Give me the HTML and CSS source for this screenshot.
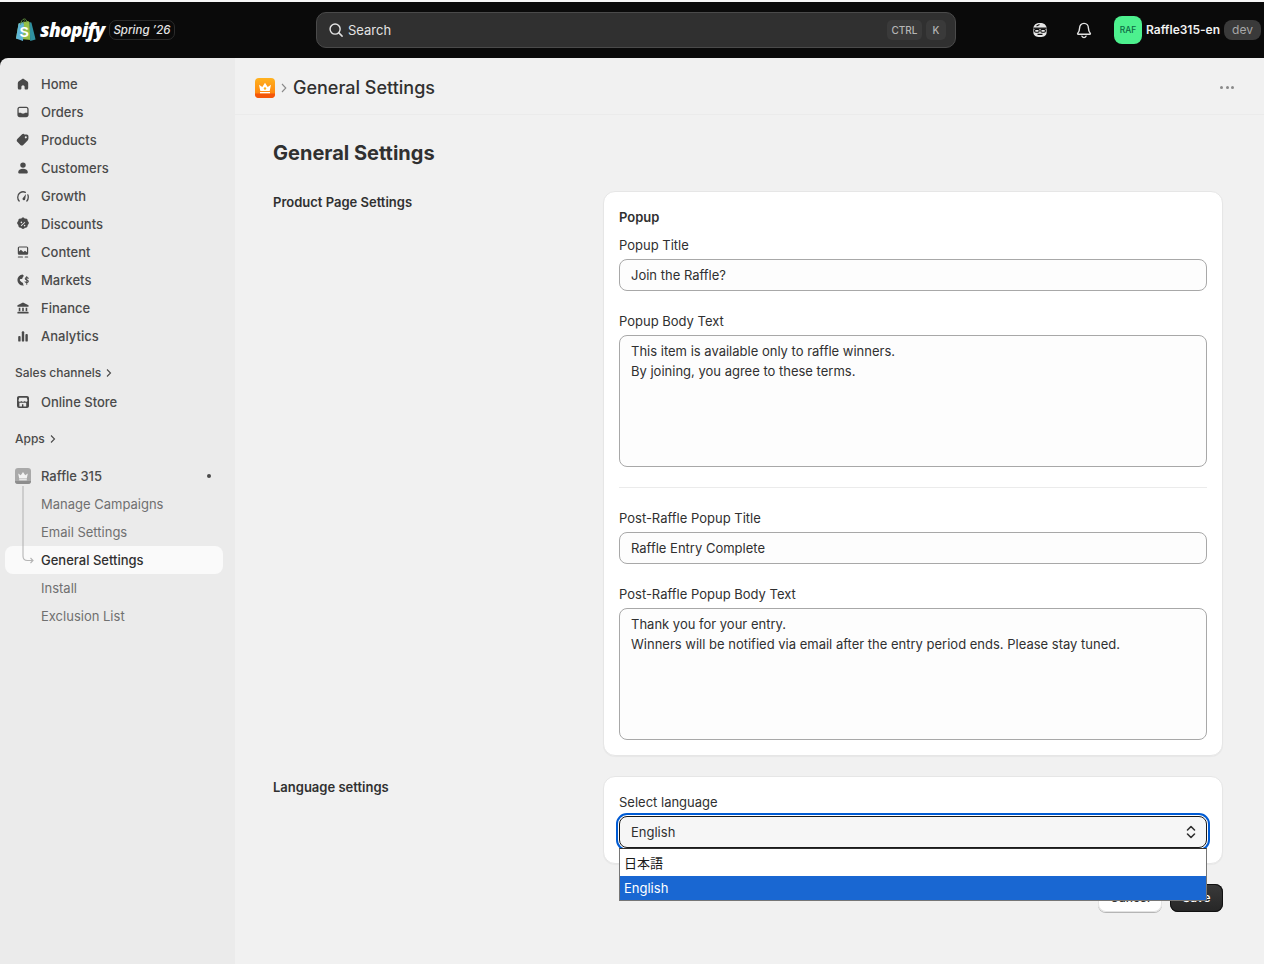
FILE: index.html
```html
<!DOCTYPE html>
<html lang="en">
<head>
<meta charset="utf-8">
<title>General Settings</title>
<link rel="stylesheet" href="styles.css">
</head>
<body>
<header class="topbar">
  <div class="brand">
    <svg class="bag" viewBox="0 0 21 24" width="21" height="24">
      <path d="M1 20.5 3.6 5.6 13 3l1.6 1.2L15.4 22 1 20.5Z" fill="#95bf47"/>
      <path d="M1 20.5 3.6 5.6 9 4l-1 19-7-2.5Z" fill="#5fb6d8"/>
      <path d="M14.6 4.2 16.4 4.6 20.6 21.4 15.2 23Z" fill="#2f8f9f"/>
      <path d="M5.6 6.6C5.8 3.4 7.4 1 9.4 1c1.5 0 2.3 1.3 2.4 3.4M8.2 5.6c.2-1.7.9-3 1.7-3" fill="none" stroke="#5e8e3e" stroke-width="1"/>
      <text x="4.6" y="18.5" class="bag-s">S</text>
    </svg>
    <span class="wordmark">shopify</span>
    <span class="season">Spring ’26</span>
  </div>
  <div class="search">
    <svg class="icon-search" viewBox="0 0 20 20" width="18" height="18"><circle cx="9" cy="9" r="5.6" fill="none" stroke="#e3e3e3" stroke-width="1.6"/><path d="m13.2 13.2 3.6 3.6" stroke="#e3e3e3" stroke-width="1.6" stroke-linecap="round"/></svg>
    <span class="search-text">Search</span>
    <kbd class="key key-ctrl">CTRL</kbd>
    <kbd class="key key-k">K</kbd>
  </div>
  <div class="top-actions">
    <svg class="top-icon" viewBox="0 0 20 20" width="20" height="20"><path d="M3.4 8.6C3.4 4.8 6.2 3 10 3s6.600 1.800 6.600 5.600v3.800C16.600 15.400 13.800 17 10 17s-6.600-1.600-6.600-4.600Z" fill="#e6e6e6"/><path d="M3.500 8.200h13" stroke="#0a0a0a" stroke-width="1.300"/><rect x="4.600" y="9.400" width="4.600" height="2.800" rx="1.200" fill="none" stroke="#0a0a0a" stroke-width="1.100"/><rect x="10.800" y="9.400" width="4.600" height="2.800" rx="1.200" fill="none" stroke="#0a0a0a" stroke-width="1.100"/><path d="M7.500 14.400h5M6.500 6l3-1.600" stroke="#0a0a0a" stroke-width="1.100"/></svg>
    <svg class="top-icon bell" viewBox="0 0 20 20" width="20" height="20"><path d="M10 3.400c-2.700 0-4.400 2-4.400 4.600 0 2.600-.7 3.800-1.900 5.400-.3.400 0 .8.400.8h11.800c.4 0 .700-.4.400-.8-1.200-1.600-1.900-2.800-1.900-5.400 0-2.600-1.700-4.600-4.400-4.600Z" fill="none" stroke="#e3e3e3" stroke-width="1.400"/><path d="M8 16.200c.4.900 1.100 1.300 2 1.300s1.600-.4 2-1.300" fill="none" stroke="#e3e3e3" stroke-width="1.400" stroke-linecap="round"/></svg>
    <span class="avatar">RAF</span>
    <span class="shop-name">Raffle315-en</span>
    <span class="dev-pill">dev</span>
  </div>
</header>

<div class="shell">
  <nav class="sidebar">
    <ul class="nav-list">
      <li class="nav-row"><svg class="nav-icon" viewBox="0 0 20 20"><path d="M10 3 4.800 6.600c-.8.600-1.300 1.400-1.300 2.400v6c0 1.100.8 2 1.800 2H7c.6 0 1-.5 1-1v-2.500c0-1.100.9-2 2-2s2 .9 2 2V16c0 .5.400 1 1 1h1.700c1 0 1.800-.9 1.800-2V9c0-1-.5-1.800-1.300-2.400Z"/></svg>Home</li>
      <li class="nav-row"><svg class="nav-icon" viewBox="0 0 20 20"><path fill-rule="evenodd" d="M6 3.500h8c1.900 0 3 1.200 3 3v7c0 1.800-1.100 3-3 3H6c-1.900 0-3-1.200-3-3v-7c0-1.800 1.100-3 3-3Zm-1.400 7.300V6.500C4.600 5.700 5.200 5 6 5h8c.8 0 1.400.7 1.400 1.500v4.300h-2.700c-.5 0-.9.300-1 .7l-.2.500H8.500l-.2-.5c-.1-.4-.5-.7-1-.7Z"/></svg>Orders</li>
      <li class="nav-row"><svg class="nav-icon" viewBox="0 0 20 20"><path fill-rule="evenodd" d="M11.800 3.200h3c.9 0 2 1.100 2 2v3c0 .9-.4 1.700-1 2.300l-5.500 5.600c-1 1-2.500 1-3.500 0l-3.900-3.900c-1-1-1-2.500 0-3.500l5.600-5.500c.6-.6 1.400-1 2.300-1Zm1.700 4.800a1.300 1.300 0 1 0 0-2.600 1.300 1.300 0 0 0 0 2.600Z"/></svg>Products</li>
      <li class="nav-row"><svg class="nav-icon" viewBox="0 0 20 20"><circle cx="10" cy="6.400" r="3.400"/><path d="M10 11c-3.600 0-6 1.900-6 4.300 0 1 .8 1.700 1.700 1.700h8.600c.9 0 1.700-.7 1.700-1.700C16 12.900 13.600 11 10 11Z"/></svg>Customers</li>
      <li class="nav-row"><svg class="nav-icon" viewBox="0 0 20 20"><path d="M5.200 16.200A7 7 0 0 1 3.400 11.500 6.700 6.700 0 0 1 13 5.400" fill="none" stroke="#4a4a4a" stroke-width="1.600" stroke-linecap="round"/><path d="M16 8.500a6.700 6.700 0 0 1 .6 3 7 7 0 0 1-1.800 4.700" fill="none" stroke="#4a4a4a" stroke-width="1.600" stroke-linecap="round"/><path d="M13.700 7.600 10.400 12a1.700 1.700 0 1 0 2.400 1.700Z"/></svg>Growth</li>
      <li class="nav-row"><svg class="nav-icon" viewBox="0 0 20 20"><path fill-rule="evenodd" d="M8.400 2.600c.9-.8 2.300-.8 3.200 0l.8.700 1.100-.1c1.200-.1 2.200.9 2.300 2.100l.1 1.100.8.800c.8.900.8 2.300 0 3.200l-.8.800-.1 1.100c-.1 1.200-1.100 2.200-2.300 2.300l-1.100.1-.8.800c-.9.800-2.300.8-3.200 0l-.8-.8-1.100-.1c-1.200-.1-2.200-1.100-2.300-2.300l-.1-1.100-.8-.8c-.8-.9-.8-2.300 0-3.200l.8-.8.100-1.100c.1-1.200 1.100-2.200 2.300-2.100l1.100.1ZM8 7a1 1 0 1 0 0 2 1 1 0 0 0 0-2Zm4 4a1 1 0 1 0 0 2 1 1 0 0 0 0-2Zm.3-3.800L7.200 12l.6.800 5-4.700Z"/></svg>Discounts</li>
      <li class="nav-row"><svg class="nav-icon" viewBox="0 0 20 20"><path fill-rule="evenodd" d="M5.500 3h9c1.200 0 2 .9 2 2v6.500c0 1.100-.8 2-2 2h-9c-1.200 0-2-.9-2-2V5c0-1.100.8-2 2-2Zm-.500 6.500 2.400-2.200 3 2.600 2.100-1.500 2.500 2V5c0-.3-.2-.5-.5-.5h-9c-.3 0-.5.200-.5.500Z"/><rect x="3.500" y="15.500" width="6.500" height="1.500" rx=".7"/><rect x="12" y="15.500" width="4.500" height="1.500" rx=".7"/></svg>Content</li>
      <li class="nav-row"><svg class="nav-icon" viewBox="0 0 20 20"><path d="M9.500 3A7 7 0 0 0 3 10a7 7 0 0 0 7 7c.8 0 1.200-.2 1.200-.2-.8-.7-1.200-1.300-1-2.300.2-1-1-1.300-1.800-1.800-.9-.6-1.300-1.300-2-1.800-.6-.5-.4-1.700.3-2 .8-.4 1.300.2 2.200-.5.800-.6.500-1.300 1-2 .4-.6 1-.8 1.200-1.600A7 7 0 0 0 9.500 3Z"/><path d="M16.600 7.900c-.4-.7-1.100-1-1.900-1-1.100 0-1.900.6-1.900 1.500 0 2 3.900 1.200 3.900 3.300 0 1-.9 1.600-2 1.600-.9 0-1.700-.4-2.100-1.100M14.700 5.600v9.600" fill="none" stroke="#4a4a4a" stroke-width="1.300" stroke-linecap="round"/></svg>Markets</li>
      <li class="nav-row"><svg class="nav-icon" viewBox="0 0 20 20"><path d="M10 3 3.700 6.300c-.5.300-.7.600-.7 1v.400c0 .5.400.8.800.8h12.400c.4 0 .8-.3.800-.8v-.4c0-.4-.2-.7-.7-1Z"/><rect x="4.700" y="9.700" width="2" height="4.300"/><rect x="9" y="9.700" width="2" height="4.300"/><rect x="13.300" y="9.700" width="2" height="4.300"/><rect x="3" y="14.800" width="14" height="2.200" rx=".8"/></svg>Finance</li>
      <li class="nav-row"><svg class="nav-icon" viewBox="0 0 20 20"><rect x="4" y="10" width="3" height="7" rx="1.200"/><rect x="8.500" y="4" width="3" height="13" rx="1.200"/><rect x="13" y="7.500" width="3" height="9.500" rx="1.200"/></svg>Analytics</li>
    </ul>

    <div class="nav-heading sales-heading">Sales channels<svg class="heading-chevron" viewBox="0 0 8 10" width="8" height="10"><path d="m2 1.500 3.500 3.500L2 8.500" fill="none" stroke="#4a4a4a" stroke-width="1.100"/></svg></div>
    <div class="nav-row"><svg class="nav-icon" viewBox="0 0 20 20"><path fill-rule="evenodd" d="M5 2.500h10c1.400 0 2.500 1.100 2.500 2.500v10c0 1.400-1.100 2.500-2.500 2.500H5A2.500 2.500 0 0 1 2.500 15V5C2.500 3.600 3.600 2.500 5 2.500Zm.300 2.300L4.400 8c0 1 .8 1.700 1.800 1.700.7 0 1.300-.3 1.700-.9.300.6 1 .9 1.700.9H10.400c.7 0 1.300-.3 1.700-.9.400.6 1 .9 1.700.9 1 0 1.800-.7 1.800-1.700l-.9-3.200Zm.2 6v4.700h3.200v-2.800h1.800v2.800h3.500v-4.700Z"/></svg>Online Store</div>

    <div class="nav-heading apps-heading">Apps<svg class="heading-chevron" viewBox="0 0 8 10" width="8" height="10"><path d="m2 1.500 3.500 3.500L2 8.500" fill="none" stroke="#4a4a4a" stroke-width="1.100"/></svg></div>

    <div class="nav-row app-row">
      <svg class="nav-icon" viewBox="0 0 16 16"><rect width="16" height="16" rx="3" fill="#a9a9a9"/><path d="M0 13h16Q16 16 13 16H3Q0 16 0 13Z" fill="#8d8d8d"/><path d="m3.200 5.400 2.600 1.800L8 4l2.200 3.200 2.600-1.800-1 5.200H4.200Z" fill="#f4f4f4"/><rect x="4.200" y="11.200" width="7.600" height="1.100" fill="#f4f4f4"/></svg>
      <span class="app-name">Raffle 315</span>
      <span class="pin-dot"></span>
    </div>
    <div class="sub-nav">
      <svg class="tree" viewBox="0 0 14 76" width="14" height="76"><path d="M1 0V70c0 3 1.500 4.500 4.500 4.500H11M8.500 72 11 74.500 8.500 77" fill="none" stroke="#b5b5b5" stroke-width="1.100"/></svg>
      <div class="nav-row sub-row">Manage Campaigns</div>
      <div class="nav-row sub-row">Email Settings</div>
      <div class="nav-row sub-row is-active">General Settings</div>
      <div class="nav-row sub-row">Install</div>
      <div class="nav-row sub-row">Exclusion List</div>
    </div>
  </nav>

  <main class="main">
    <div class="app-header">
      <svg class="app-logo" viewBox="0 0 20 20" width="20" height="20"><defs><linearGradient id="orange" x1="0" y1="0" x2="0" y2="1"><stop offset="0" stop-color="#ffb21f"/><stop offset="1" stop-color="#ff7a0a"/></linearGradient></defs><rect width="20" height="20" rx="4" fill="url(#orange)"/><path d="M0 15.500h20V16a4 4 0 0 1-4 4H4a4 4 0 0 1-4-4Z" fill="#f4560a"/><path d="m4 6.700 3.300 2.200L10 4.800l2.700 4.100L16 6.700l-1.300 6.400H5.300Z" fill="#fff"/><rect x="5" y="14" width="10" height="1.300" fill="#fff"/><circle cx="10" cy="10.500" r="1.200" fill="#ffb21f"/></svg>
      <svg class="crumb-chevron" viewBox="0 0 8 10" width="8" height="10"><path d="m2 1 3.800 4L2 9" fill="none" stroke="#8a8a8a" stroke-width="1.100"/></svg>
      <span class="app-title">General Settings</span>
      <span class="more-dots"><i></i><i></i><i></i></span>
    </div>

    <div class="page">
      <h1 class="page-title">General Settings</h1>

      <section class="settings-row">
        <h2 class="section-label">Product Page Settings</h2>
        <div class="card">
          <div class="card-heading">Popup</div>
          <div class="label">Popup Title</div>
          <div class="input">Join the Raffle?</div>
          <div class="label spaced">Popup Body Text</div>
          <div class="textarea">This item is available only to raffle winners.
By joining, you agree to these terms.</div>
          <hr class="divider">
          <div class="label">Post-Raffle Popup Title</div>
          <div class="input">Raffle Entry Complete</div>
          <div class="label spaced">Post-Raffle Popup Body Text</div>
          <div class="textarea">Thank you for your entry.
Winners will be notified via email after the entry period ends. Please stay tuned.</div>
        </div>
      </section>

      <section class="settings-row">
        <h2 class="section-label">Language settings</h2>
        <div class="card">
          <div class="label">Select language</div>
          <div class="select">English
            <svg class="select-arrows" viewBox="0 0 12 16" width="12" height="16"><path d="m2.500 6 3.500-3.500L9.500 6M2.500 10 6 13.500 9.500 10" fill="none" stroke="#303030" stroke-width="1.600" stroke-linecap="round" stroke-linejoin="round"/></svg>
            <ul class="dropdown">
              <li class="option option-ja">日本語</li>
              <li class="option option-selected">English</li>
            </ul>
          </div>
        </div>
      </section>

      <div class="actions">
        <button class="btn btn-cancel">Cancel</button>
        <button class="btn btn-save">Save</button>
      </div>
    </div>
  </main>
</div>
</body>
</html>
```

FILE: styles.css
```css
* { box-sizing: border-box; }

html, body {
  margin: 0;
  height: 100%;
}

body {
  font-family: Inter, "Noto Sans CJK JP", sans-serif;
  font-size: 13px;
  line-height: 20px;
  color: #303030;
  background: #f1f1f1;
  overflow: hidden;
}

ul { list-style: none; margin: 0; padding: 0; }

/* Top bar */
.topbar {
  height: 58px;
  border-top: 2px solid #f7f7f7;
  background: #0a0a0a;
  display: flex;
  align-items: center;
  position: relative;
}

.brand {
  width: 316px;
  flex: none;
  display: flex;
  align-items: center;
  padding-left: 15px;
}

.bag { flex: none; }

.bag-s {
  font-family: "Liberation Sans", sans-serif;
  font-size: 14px;
  font-weight: 700;
  fill: #fff;
}

.wordmark {
  margin-left: 4px;
  width: 69px;
  font-family: "Open Sans", sans-serif;
  font-size: 19px;
  font-weight: 800;
  font-style: italic;
  letter-spacing: -0.6px;
  color: #fff;
}

.season {
  height: 20px;
  width: 66px;
  border: 1px solid #2b2b2b;
  border-radius: 7px;
  font-size: 11.500px;
  font-style: italic;
  font-weight: 500;
  line-height: 18px;
  text-align: center;
  color: #e3e3e3;
  white-space: nowrap;
}

.search {
  width: 640px;
  height: 36px;
  flex: none;
  display: flex;
  align-items: center;
  background: #303030;
  border: 1px solid #4a4a4a;
  border-radius: 10px;
  padding: 0 9px 0 10px;
  color: #e3e3e3;
}

.search-text { margin-left: 3px; flex: 1; font-size: 13px; color: #e3e3e3; }

.key {
  height: 20px;
  background: #3a3a3a;
  border-radius: 5px;
  font-family: Inter, sans-serif;
  font-size: 10px;
  font-weight: 500;
  line-height: 20px;
  text-align: center;
  color: #b5b5b5;
}

.key-ctrl { width: 35px; margin-right: 4px; }
.key-k { width: 20px; }

.top-actions {
  flex: 1;
  display: flex;
  align-items: center;
  padding-left: 74px;
}

.top-icon { flex: none; }
.bell { margin-left: 24px; }

.avatar {
  margin-left: 20px;
  width: 28px;
  height: 28px;
  flex: none;
  border-radius: 8px;
  background: #4df18e;
  color: #0e6b45;
  font-size: 8.500px;
  font-weight: 500;
  line-height: 28px;
  text-align: center;
}

.shop-name {
  margin-left: 4px;
  font-size: 12px;
  font-weight: 600;
  color: #f1f1f1;
}

.dev-pill {
  margin-left: 4px;
  width: 37px;
  height: 20px;
  border-radius: 8px;
  background: #3a3a3a;
  color: #a8a8a8;
  font-size: 12px;
  line-height: 20px;
  text-align: center;
}

/* Shell */
.shell {
  display: flex;
  height: 906px;
  background: #0a0a0a;
}

/* Sidebar */
.sidebar {
  width: 235px;
  flex: none;
  background: #ebebeb;
  border-top-left-radius: 8px;
  padding: 12px 12px 0 5px;
}

.nav-row {
  height: 28px;
  display: flex;
  align-items: center;
  padding-left: 10px;
  font-weight: 500;
  color: #4a4a4a;
  border-radius: 8px;
  line-height: 20px;
}

.nav-icon {
  width: 16px;
  height: 16px;
  flex: none;
  margin-right: 10px;
  fill: #4a4a4a;
}

.nav-list .nav-icon, .sidebar > .nav-row .nav-icon { width: 16px; height: 16px; }

.nav-heading {
  height: 20px;
  display: flex;
  align-items: center;
  padding-left: 10px;
  font-size: 12px;
  font-weight: 500;
  color: #4a4a4a;
}

.heading-chevron { margin-left: 4px; }

.sales-heading { margin-top: 13px; margin-bottom: 5px; }
.apps-heading { margin-top: 13px; margin-bottom: 13px; }

.app-name { flex: 1; }

.pin-dot {
  width: 4px;
  height: 4px;
  border-radius: 50%;
  background: #4a4a4a;
  margin-right: 12px;
}

.sub-nav { position: relative; }

.sub-row {
  padding-left: 36px;
  font-weight: 400;
  color: #707070;
}

.is-active {
  background: #fafafa;
  color: #303030;
  font-weight: 500;
}

.tree {
  position: absolute;
  left: 17px;
  top: -4px;
  z-index: 1;
  overflow: visible;
}

/* Main */
.main {
  flex: 1;
  min-width: 0;
  background: #f1f1f1;
}

.app-header {
  height: 57px;
  display: flex;
  align-items: center;
  padding: 3px 30px 0 20px;
  border-bottom: 1px solid #ebebeb;
}

.app-logo { flex: none; }
.crumb-chevron { margin-left: 5px; flex: none; }

.app-title {
  margin-left: 5px;
  flex: 1;
  font-size: 18px;
  font-weight: 550;
  color: #303030;
}

.more-dots { display: flex; gap: 2.500px; }

.more-dots i {
  width: 3px;
  height: 3px;
  border-radius: 50%;
  background: #8a8a8a;
}

.page { padding: 24px 41px 0 38px; }

.page-title {
  margin: 0 0 24px;
  font-size: 20px;
  line-height: 28px;
  font-weight: 650;
  color: #303030;
}

.settings-row {
  display: grid;
  grid-template-columns: 330px 620px;
  margin-bottom: 20px;
}

.section-label {
  margin: 0;
  padding-top: 1px;
  font-size: 13px;
  line-height: 20px;
  font-weight: 600;
  color: #303030;
}

.card {
  background: #fff;
  border: 1px solid #e6e6e6;
  border-radius: 12px;
  padding: 15px;
  box-shadow: 0 1px 1px rgba(0, 0, 0, 0.04);
}

.card-heading {
  font-weight: 600;
  margin-bottom: 8px;
}

.label { margin-bottom: 4px; }
.label.spaced { margin-top: 20px; }

.input, .textarea, .select {
  background: #fdfdfd;
  border: 1px solid #a8a8a8;
  border-radius: 8px;
  padding: 0 11px;
  color: #303030;
}

.input {
  height: 32px;
  line-height: 30px;
}

.textarea {
  height: 132px;
  padding-top: 5px;
  white-space: pre-line;
}

.divider {
  margin: 20px 0;
  border: 0;
  height: 1px;
  background: #ebebeb;
}

.select {
  position: relative;
  height: 32px;
  line-height: 30px;
  background: #f6f6f6;
  border-color: #1a1a1a;
  outline: 2px solid #005bd3;
  outline-offset: 1px;
}

.select-arrows {
  position: absolute;
  right: 9px;
  top: 7px;
}

.dropdown {
  position: absolute;
  left: -1px;
  right: -1px;
  top: 31px;
  z-index: 5;
  height: 53px;
  padding-top: 1px;
  background: #fff;
  border: 1px solid #767676;
  border-top-color: #303030;
}

.option {
  padding-left: 4px;
  color: #1a1a1a;
  line-height: 24px;
}

.option-ja {
  height: 26px;
  line-height: 27px;
  font-size: 13px;
}

.option-selected {
  height: 24px;
  background: #1967d2;
  color: #fff;
}

.actions {
  display: flex;
  justify-content: flex-end;
  gap: 8px;
}

.btn {
  height: 28px;
  border-radius: 8px;
  border: 0;
  padding: 0;
  font: 550 12px/28px Inter, sans-serif;
}

.btn-cancel {
  width: 64px;
  background: #fff;
  color: #303030;
  box-shadow: 0 1px 0 #b5b5b5, 0 0 0 1px #e3e3e3 inset;
}

.btn-save {
  width: 53px;
  background: linear-gradient(#3a3a3a, #262626);
  color: #fff;
  box-shadow: 0 0 0 1px #111 inset;
}
```
